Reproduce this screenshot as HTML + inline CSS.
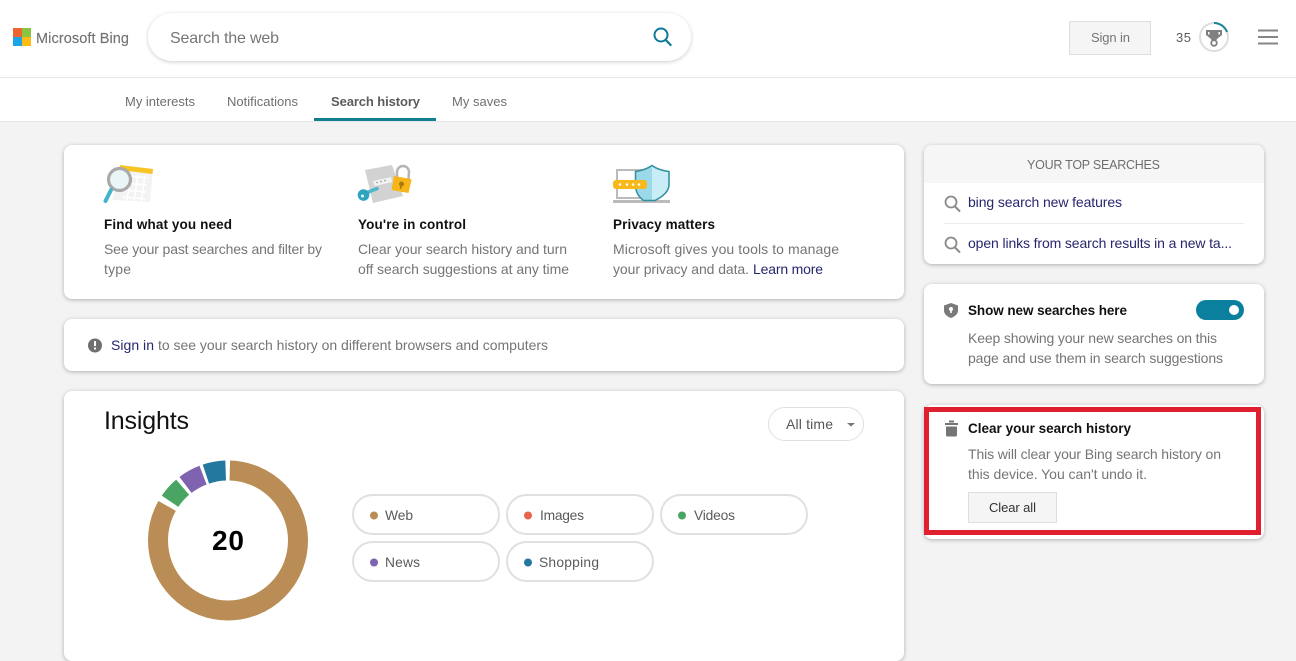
<!DOCTYPE html>
<html lang="en">
<head>
<meta charset="utf-8">
<title>Microsoft Bing - Search history</title>
<style>
html,body{margin:0;padding:0;width:1296px;height:641px;overflow:hidden;background:#f3f3f3;font-family:"Liberation Sans",sans-serif}
.abs{position:absolute;box-sizing:border-box}
.card{position:absolute;box-sizing:border-box;background:#fff;border-radius:8px;box-shadow:0 1px 4px rgba(0,0,0,.28)}
svg.o{position:absolute;left:0;top:0}
text{font-family:"Liberation Sans",sans-serif}
.b{font-size:14px;fill:#757575}
.h{font-size:13.5px;font-weight:bold;fill:#111}
.l{font-size:14px;fill:#27276e}
.n{font-size:13px;fill:#6f6f6f}
.c{font-size:13.8px;fill:#5a5a5a}
</style>
</head>
<body>
<div class="abs" style="left:0;top:0;width:1296px;height:78px;background:#fff;border-bottom:1px solid #e8e8e8"></div>
<div class="abs" style="left:0;top:78px;width:1296px;height:44px;background:#fff;border-bottom:1px solid #e6e6e6"></div>
<div class="abs" style="left:314px;top:118px;width:122px;height:3px;background:#137e8e"></div>
<div class="abs" style="left:148px;top:13px;width:543px;height:48px;background:#fff;border-radius:24px;box-shadow:0 1px 4px rgba(0,0,0,.2)"></div>
<div class="abs" style="left:1069px;top:21px;width:82px;height:34px;background:#f5f5f5;border:1px solid #dedede"></div>

<div class="card" style="left:64px;top:145px;width:840px;height:154px"></div>
<div class="card" style="left:64px;top:319px;width:840px;height:52px"></div>
<div class="card" style="left:64px;top:391px;width:840px;height:270px"></div>
<div class="card" style="left:924px;top:145px;width:340px;height:119px;overflow:hidden"><div style="height:38px;background:#f6f6f6"></div></div>
<div class="card" style="left:924px;top:284px;width:340px;height:100px"></div>
<div class="card" style="left:924px;top:405px;width:340px;height:134px"></div>

<div class="abs" style="left:924px;top:407px;width:337px;height:128px;border:5px solid #e01f2f"></div>
<div class="abs" style="left:968px;top:492px;width:89px;height:31px;background:#f5f5f5;border:1px solid #dedede"></div>
<div class="abs" style="left:768px;top:407px;width:96px;height:34px;border:1px solid #e0e0e0;border-radius:17px"></div>
<div class="abs" style="left:352px;top:494px;width:148px;height:41px;border:2px solid #e0e0e0;border-radius:21px"></div>
<div class="abs" style="left:506px;top:494px;width:148px;height:41px;border:2px solid #e0e0e0;border-radius:21px"></div>
<div class="abs" style="left:660px;top:494px;width:148px;height:41px;border:2px solid #e0e0e0;border-radius:21px"></div>
<div class="abs" style="left:352px;top:541px;width:148px;height:41px;border:2px solid #e0e0e0;border-radius:21px"></div>
<div class="abs" style="left:506px;top:541px;width:148px;height:41px;border:2px solid #e0e0e0;border-radius:21px"></div>

<svg class="o" width="1296" height="641" viewBox="0 0 1296 641" xmlns="http://www.w3.org/2000/svg">
<!-- logo -->
<rect x="13" y="28" width="9" height="9" fill="#f0652f"/>
<rect x="22" y="28" width="9" height="9" fill="#8bc43f"/>
<rect x="13" y="37" width="9" height="9" fill="#1ea5e6"/>
<rect x="22" y="37" width="9" height="9" fill="#fdbb13"/>
<text x="36" y="43" font-size="14.500" fill="#737373" stroke="#737373" stroke-width=".15" textLength="93" lengthAdjust="spacing">Microsoft Bing</text>
<text x="170" y="43" font-size="16" fill="#767676" textLength="109" lengthAdjust="spacing">Search the web</text>
<!-- search icon -->
<circle cx="661" cy="35" r="6.5" fill="none" stroke="#0d7a96" stroke-width="2"/>
<path d="M665.800 40l5.400 5.600" stroke="#0d7a96" stroke-width="2.200" fill="none"/>
<!-- top right -->
<text x="1091" y="42" font-size="13" fill="#757575" textLength="39" lengthAdjust="spacing">Sign in</text>
<text x="1176" y="42" font-size="13" fill="#5c5c5c" textLength="15" lengthAdjust="spacing">35</text>
<circle cx="1214" cy="37" r="14" fill="#fff" stroke="#dedede" stroke-width="2"/>
<path d="M1214 23a14 14 0 0 1 13 9" fill="none" stroke="#1a8496" stroke-width="2"/>
<path d="M1206 30h16v5l-4.500 3.500-1.500 2h-4l-1.500-2-4.500-3.500z" fill="#808080"/>
<path d="M1208 32h1.500v3l-1.500-1zM1220 32h-1.500v3l1.500-1z" fill="#fff"/>
<circle cx="1214" cy="43" r="2.800" fill="#fff" stroke="#808080" stroke-width="1.800"/>
<path d="M1258 30.500h20M1258 37h20M1258 43.500h20" stroke="#858585" stroke-width="2"/>
<!-- nav -->
<text class="n" x="125" y="106" textLength="70" lengthAdjust="spacing">My interests</text>
<text class="n" x="227" y="106" textLength="71" lengthAdjust="spacing">Notifications</text>
<text class="n" x="331" y="106" font-weight="bold" style="fill:#5c5c5c" textLength="89" lengthAdjust="spacing">Search history</text>
<text class="n" x="452" y="106" textLength="55" lengthAdjust="spacing">My saves</text>

<!-- illustration 1 -->
<path d="M120 166l33 4-3 32-38-2z" fill="#f3f3f3"/>
<path d="M127 176l21 2M125 183l22 2M124 190l22 2M123 197l22 2M131 173l-4 28M138 174l-4 28M145 175l-4 28" stroke="#fff" stroke-width="1.500"/>
<path d="M120 165l33 4-.5 5-33-4z" fill="#f7c325"/>
<circle cx="119.500" cy="179.500" r="11" fill="#eaf5f8" stroke="#aaaaaa" stroke-width="3.200"/>
<path d="M111 190l-5.500 11" stroke="#45b3c9" stroke-width="4" stroke-linecap="round"/>
<!-- illustration 2 -->
<path d="M365 170l27-5 11 31-30 7z" fill="#d2d2d2"/>
<path d="M373 181l18-4 1.500 5-18 4z" fill="#f2f2f2"/>
<path d="M377 182.500h.01M381 181.500h.01M385 180.500h.01" stroke="#888" stroke-width="1.500" stroke-linecap="round"/>
<path d="M366 193l11-4.500" stroke="#4db6cc" stroke-width="3.500" stroke-linecap="round"/>
<circle cx="363.500" cy="195" r="5.800" fill="#2ea4c0"/>
<circle cx="362.500" cy="196" r="1.500" fill="#e8f6fa"/>
<path d="M397 177v-5a6 6 0 0 1 12 0l-.5 7" fill="none" stroke="#b5b5b5" stroke-width="2.500"/>
<path d="M394 176l17 3 .5 1-3 13-17-3z" fill="#f7b519"/>
<circle cx="401.500" cy="184" r="2.500" fill="#a87a10"/>
<path d="M401 185.500l-.5 3.500" stroke="#a87a10" stroke-width="1.500"/>
<!-- illustration 3 -->
<rect x="617" y="170" width="40" height="28" fill="#fff" stroke="#bbbbbb" stroke-width="2"/>
<rect x="613" y="200" width="57" height="3" fill="#bbbbbb"/>
<path d="M652 165.500c4 3 9 5 17 6v13c0 7-6 12-14 16h-11.500c-4-3-8-8-8-15v-14c7-1 12-3 16.500-6z" fill="#c8edf7"/>
<path d="M652 165.500c-4.500 3-9.500 5-16.500 6v14c0 7 4 12 8 15h8.500z" fill="#9bd8e8"/>
<path d="M652 165.500c4 3 9 5 17 6v13c0 7-6 12-14 16h-11.500c-4-3-8-8-8-15v-14c7-1 12-3 16.500-6z" fill="none" stroke="#2f8f9f" stroke-width="1.500"/>
<rect x="613" y="180" width="34" height="9" rx="3" fill="#f9b91a"/>
<path d="M620 184.500h.01M627 184.500h.01M633 184.500h.01M639 184.500h.01" stroke="#fff" stroke-width="2.500" stroke-linecap="round"/>

<!-- card 1 text -->
<text class="h" x="104" y="229" textLength="128" lengthAdjust="spacing">Find what you need</text>
<text class="b" x="104" y="254" textLength="218" lengthAdjust="spacing">See your past searches and filter by</text>
<text class="b" x="104" y="274" textLength="27" lengthAdjust="spacing">type</text>
<text class="h" x="358" y="229" textLength="108" lengthAdjust="spacing">You're in control</text>
<text class="b" x="358" y="254" textLength="209" lengthAdjust="spacing">Clear your search history and turn</text>
<text class="b" x="358" y="274" textLength="211" lengthAdjust="spacing">off search suggestions at any time</text>
<text class="h" x="613" y="229" textLength="102" lengthAdjust="spacing">Privacy matters</text>
<text class="b" x="613" y="254" textLength="226" lengthAdjust="spacing">Microsoft gives you tools to manage</text>
<text class="b" x="613" y="274" textLength="136" lengthAdjust="spacing">your privacy and data.</text>
<text class="l" x="753" y="274" textLength="70" lengthAdjust="spacing">Learn more</text>

<!-- card 2 -->
<circle cx="95" cy="345.500" r="7" fill="#6f6f6f"/>
<path d="M95 341v5" stroke="#fff" stroke-width="2"/>
<rect x="94" y="347.500" width="2" height="2" fill="#fff"/>
<text class="l" x="111" y="350" textLength="43" lengthAdjust="spacing">Sign in</text>
<text class="b" x="158" y="350" textLength="390" lengthAdjust="spacing">to see your search history on different browsers and computers</text>

<!-- insights -->
<text x="104" y="429" font-size="25" fill="#111" textLength="85" lengthAdjust="spacing">Insights</text>
<text x="786" y="429" font-size="14" fill="#555" textLength="47" lengthAdjust="spacing">All time</text>
<path d="M847 423h8l-4 3.500z" fill="#777"/>
<g fill="none" stroke-width="20" transform="rotate(-90 228 540.500)">
<circle cx="228" cy="540.500" r="70" pathLength="360" stroke="#b98d55" stroke-dasharray="298.500 360" stroke-dashoffset="-1.500"/>
<circle cx="228" cy="540.500" r="70" pathLength="360" stroke="#4aa564" stroke-dasharray="15.500 360" stroke-dashoffset="-304.500"/>
<circle cx="228" cy="540.500" r="70" pathLength="360" stroke="#7f62b0" stroke-dasharray="16.500 360" stroke-dashoffset="-323"/>
<circle cx="228" cy="540.500" r="70" pathLength="360" stroke="#23789f" stroke-dasharray="16.500 360" stroke-dashoffset="-342"/>
</g>
<text x="212" y="550" font-size="28" font-weight="bold" fill="#000" textLength="32" lengthAdjust="spacing">20</text>

<circle cx="374" cy="515.500" r="4" fill="#b98d55"/>
<text class="c" x="385" y="520" textLength="28" lengthAdjust="spacing">Web</text>
<circle cx="528" cy="515.500" r="4" fill="#e8644a"/>
<text class="c" x="540" y="520" textLength="44" lengthAdjust="spacing">Images</text>
<circle cx="682" cy="515.500" r="4" fill="#4aa564"/>
<text class="c" x="694" y="520" textLength="41" lengthAdjust="spacing">Videos</text>
<circle cx="374" cy="562.500" r="4" fill="#7f62b0"/>
<text class="c" x="385" y="567" textLength="35" lengthAdjust="spacing">News</text>
<circle cx="528" cy="562.500" r="4" fill="#23789f"/>
<text class="c" x="539" y="567" textLength="60" lengthAdjust="spacing">Shopping</text>

<!-- top searches -->
<text x="1027" y="169" font-size="12.5" fill="#6e6e6e" textLength="133" lengthAdjust="spacing">YOUR TOP SEARCHES</text>
<circle cx="951" cy="202" r="5.500" fill="none" stroke="#8a8a8a" stroke-width="1.800"/>
<path d="M955 206.500l5 5" stroke="#8a8a8a" stroke-width="2"/>
<text class="l" x="968" y="207" textLength="154" lengthAdjust="spacing">bing search new features</text>
<rect x="944" y="223" width="300" height="1" fill="#ececec"/>
<circle cx="951" cy="243" r="5.500" fill="none" stroke="#8a8a8a" stroke-width="1.800"/>
<path d="M955 247.500l5 5" stroke="#8a8a8a" stroke-width="2"/>
<text class="l" x="968" y="248" textLength="264" lengthAdjust="spacing">open links from search results in a new ta...</text>

<!-- show new searches -->
<path d="M951 303l7 2.500v5c0 3.500-3 6-7 7.500-4-1.500-7-4-7-7.500v-5z" fill="#7a7a7a"/>
<circle cx="951" cy="309" r="2" fill="#fff"/>
<rect x="950.200" y="309" width="1.600" height="4" fill="#fff"/>
<text class="h" x="968" y="315" textLength="159" lengthAdjust="spacing">Show new searches here</text>
<rect x="1196" y="300" width="48" height="20" rx="10" fill="#0b7f9e"/>
<circle cx="1234" cy="310" r="5" fill="#fff"/>
<text class="b" x="968" y="343" textLength="249" lengthAdjust="spacing">Keep showing your new searches on this</text>
<text class="b" x="968" y="363" textLength="255" lengthAdjust="spacing">page and use them in search suggestions</text>

<!-- clear -->
<rect x="945" y="423" width="13" height="2" fill="#757575"/>
<rect x="949" y="420.500" width="5" height="2" fill="#757575"/>
<path d="M946 426.500h11v8.500a1.500 1.500 0 0 1-1.500 1.500h-8a1.500 1.500 0 0 1-1.500-1.500z" fill="#757575"/>
<text class="h" x="968" y="433" textLength="163" lengthAdjust="spacing">Clear your search history</text>
<text class="b" x="968" y="459" textLength="253" lengthAdjust="spacing">This will clear your Bing search history on</text>
<text class="b" x="968" y="479" textLength="179" lengthAdjust="spacing">this device. You can't undo it.</text>
<text x="989" y="512" font-size="13" fill="#333" textLength="47" lengthAdjust="spacing">Clear all</text>
</svg>
</body>
</html>
